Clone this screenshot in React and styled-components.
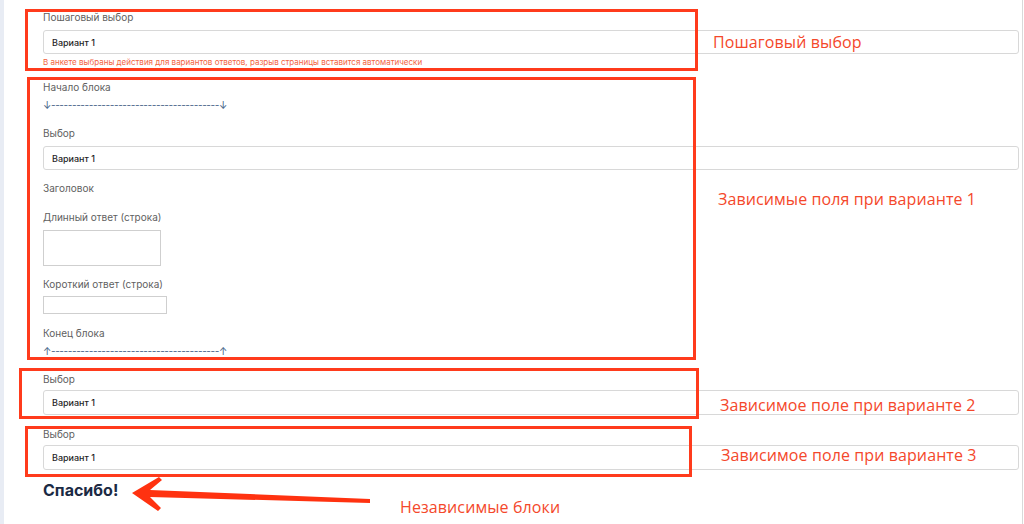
import styled, { createGlobalStyle } from "styled-components";

const GlobalStyle = createGlobalStyle`
  html, body {
    margin: 0;
    padding: 0;
    background: #ffffff;
  }
  body {
    font-family: Inter, "Noto Sans", sans-serif;
  }
`;

const Page = styled.div`
  position: relative;
  display: flex;
  width: 1024px;
  height: 524px;
  overflow: hidden;
  background: #fff;
`;

const SideStrip = styled.div`
  width: 4px;
  flex: none;
  background: #e8ecf4;
`;

const Form = styled.div`
  display: flex;
  flex-direction: column;
  width: 976px;
  padding-left: 39px;
  box-sizing: content-box;
`;

const RightRule = styled.div`
  width: 1px;
  margin-left: 3px;
  flex: none;
  background: #d9d9d9;
`;

const Field = styled.div`
  display: flex;
  flex-direction: column;
  align-items: flex-start;
  margin-top: ${(p) => p.$mt}px;
`;

const Label = styled.div`
  font-size: 10px;
  line-height: 12px;
  color: #5f5f5f;
  margin-bottom: ${(p) => p.$gap ?? 0}px;
`;

const Select = styled.div`
  display: flex;
  align-items: center;
  box-sizing: border-box;
  width: 976px;
  height: ${(p) => p.$h ?? 24}px;
  padding-left: 8px;
  border: 1px solid #d8d8d8;
  border-radius: 3px;
  font-size: 9px;
  font-weight: 500;
  color: #1f1f1f;
  background: #fff;
`;

const TextArea = styled.div`
  box-sizing: border-box;
  width: 118px;
  height: 36px;
  border: 1px solid #cfcfcf;
  background: #fff;
`;

const ShortInput = styled.div`
  box-sizing: border-box;
  width: 124px;
  height: 18px;
  border: 1px solid #cfcfcf;
  background: #fff;
`;

const Hint = styled.div`
  margin-top: 4px;
  font-size: 8px;
  line-height: 9px;
  color: #f2643f;
  white-space: nowrap;
`;

const Divider = styled.div`
  margin-top: 6px;
  font-size: 10px;
  line-height: 12px;
  color: #3f5f86;
  letter-spacing: -0.4px;
  white-space: nowrap;
`;

const Thanks = styled.div`
  margin-top: ${(p) => p.$mt}px;
  font-size: 16px;
  line-height: 18px;
  font-weight: 700;
  color: #1b2a44;
`;

/* annotation layer drawn on top of the form */
const Frame = styled.div`
  position: absolute;
  left: ${(p) => p.$x}px;
  top: ${(p) => p.$y}px;
  width: ${(p) => p.$w}px;
  height: ${(p) => p.$h}px;
  box-sizing: border-box;
  border: 3px solid #ff3b1c;
  pointer-events: none;
`;

const Note = styled.div`
  position: absolute;
  left: ${(p) => p.$x}px;
  top: ${(p) => p.$y}px;
  font-family: "Open Sans", "Noto Sans", sans-serif;
  font-size: 16px;
  line-height: 20px;
  color: #f4482b;
  white-space: nowrap;
  letter-spacing: 0.1px;
`;

const ArrowSvg = styled.svg`
  position: absolute;
  left: 0;
  top: 0;
  pointer-events: none;
`;

const dashes = "-".repeat(40);

const frames = [
  { x: 25, y: 9, w: 673, h: 62 },
  { x: 27, y: 77, w: 669, h: 283 },
  { x: 19, y: 368, w: 680, h: 51 },
  { x: 25, y: 426, w: 667, h: 51 },
];

const notes = [
  { x: 713, y: 32, text: "Пошаговый выбор" },
  { x: 718, y: 189, text: "Зависимые поля при варианте 1" },
  { x: 720, y: 395, text: "Зависимое поле при варианте 2" },
  { x: 721, y: 445, text: "Зависимое поле при варианте 3" },
  { x: 400, y: 497, text: "Независимые блоки" },
];

export default function App() {
  return (
    <>
      <GlobalStyle />
      <Page>
        <SideStrip />
        <Form>
          <Field $mt={11}>
            <Label $gap={7}>Пошаговый выбор</Label>
            <Select>Вариант 1</Select>
            <Hint>
              В анкете выбраны действия для вариантов ответов, разрыв страницы вставится автоматически
            </Hint>
          </Field>

          <Field $mt={14}>
            <Label>Начало блока</Label>
            <Divider>↓{dashes}↓</Divider>
          </Field>

          <Field $mt={16}>
            <Label $gap={7}>Выбор</Label>
            <Select>Вариант 1</Select>
          </Field>

          <Field $mt={12}>
            <Label>Заголовок</Label>
          </Field>

          <Field $mt={17}>
            <Label $gap={7}>Длинный ответ (строка)</Label>
            <TextArea />
          </Field>

          <Field $mt={12}>
            <Label $gap={6}>Короткий ответ (строка)</Label>
            <ShortInput />
          </Field>

          <Field $mt={13}>
            <Label>Конец блока</Label>
            <Divider>↑{dashes}↑</Divider>
          </Field>

          <Field $mt={16}>
            <Label $gap={5}>Выбор</Label>
            <Select $h={25}>Вариант 1</Select>
          </Field>

          <Field $mt={13}>
            <Label $gap={5}>Выбор</Label>
            <Select $h={25}>Вариант 1</Select>
          </Field>

          <Thanks $mt={11}>Спасибо!</Thanks>
        </Form>
        <RightRule />

        {frames.map((f, i) => (
          <Frame key={i} $x={f.x} $y={f.y} $w={f.w} $h={f.h} />
        ))}
        {notes.map((n, i) => (
          <Note key={i} $x={n.x} $y={n.y}>
            {n.text}
          </Note>
        ))}
        <ArrowSvg width="1024" height="524" viewBox="0 0 1024 524">
          <polygon
            points="132,493 159,477 162,480 150,490 370,499 370,503 150,497 161,508 158,511"
            fill="#ff3210"
          />
        </ArrowSvg>
      </Page>
    </>
  );
}
